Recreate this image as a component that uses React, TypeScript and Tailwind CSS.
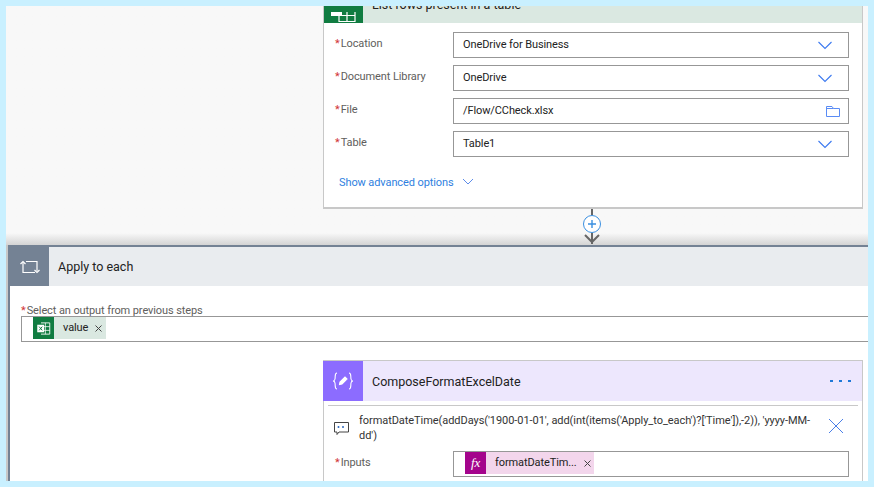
import React from 'react';

const Chevron = () => (
    <svg width="16" height="9" viewBox="0 0 16 9" fill="none" stroke="#3b79f0" strokeWidth="1.1" className="shrink-0">
        <path d="M1.5 1 L8 7.5 L14.5 1" />
    </svg>
);

const Folder = () => (
    <svg width="16" height="13" viewBox="0 0 16 13" fill="none" stroke="#5a8cf5" strokeWidth="1" className="shrink-0 -mr-[8px]">
        <path d="M1.5 11.5 V1.5 H7 L8.5 3.5 H14.5 V11.5 Z M1.5 3.5 H8.5" />
    </svg>
);

const ExcelIcon = ({ size }: { size: number }) => (
    <svg width={size} height={size} viewBox="0 0 24 24" fill="none" className="shrink-0">
        <path d="M8 3 H22 V21 H8" stroke="#ffffff" strokeWidth="1.4" />
        <path d="M8 9 H22 M8 15 H22 M15 3 V21" stroke="#ffffff" strokeWidth="1.2" />
        <rect x="2" y="6" width="11" height="12" fill="#ffffff" />
        <path d="M5 9 L10 15 M10 9 L5 15" stroke="#107c41" strokeWidth="1.5" />
    </svg>
);

const SmallX = () => (
    <svg width="7" height="7" viewBox="0 0 7 7" fill="none" stroke="#444444" strokeWidth="1" className="shrink-0">
        <path d="M0.5 0.5 L6.5 6.5 M6.5 0.5 L0.5 6.5" />
    </svg>
);

const Field = ({ label, value, icon }: { label: string; value: string; icon: React.ReactNode }) => (
    <div className="flex items-start h-[26px]">
        <div className="w-[129px] pl-[11px] mt-[2px] text-[#605e5c] leading-[20px]">
            <span className="text-[#d13438] mr-[1px]">*</span>{label}
        </div>
        <div className="w-[396px] h-[26px] border border-[#979797] flex items-center justify-between pl-[9px] pr-[15px] text-[#222222]">
            <span>{value}</span>
            {icon}
        </div>
    </div>
);

export default function App() {
    return (
        <div className="w-[874px] h-[487px] bg-[#c9f0ff] p-[6px] font-['Roboto',sans-serif] text-[11px] tracking-[-0.1px]">
            <div className="w-[862px] h-[475px] bg-[#f8f8f8] overflow-hidden flex flex-col">
                {/* top canvas with the table card */}
                <div className="h-[239px] shrink-0 bg-gradient-to-b from-[#f8f8f8] from-[95%] to-[#d4d4d4] pl-[317px]">
                    <div className="w-[540px] h-[203px] bg-white border-l border-r border-b-2 border-[#c8c8c8]">
                        <div className="h-[17px] bg-[#dae8e1] flex overflow-hidden">
                            <div className="w-[40px] h-[17px] bg-[#107c41] overflow-hidden flex justify-center items-end pb-[1px] -ml-[1px]">
                                <svg width="25" height="10" viewBox="0 0 25 10" fill="none" stroke="#ffffff" strokeWidth="1.2">
                                    <path d="M8 0 V9.5 H24 V0 M16 0 V9.5 M8 3.5 H24" />
                                    <rect x="0" y="0" width="11" height="4" fill="#ffffff" stroke="none" />
                                </svg>
                            </div>
                            <span className="ml-[9px] text-[12.5px] tracking-normal leading-[14px] text-[#222222] -mt-[8px]">List rows present in a table</span>
                        </div>
                        <div className="flex flex-col gap-[7px] pt-[9px]">
                            <Field label="Location" value="OneDrive for Business" icon={<Chevron />} />
                            <Field label="Document Library" value="OneDrive" icon={<Chevron />} />
                            <Field label="File" value="/Flow/CCheck.xlsx" icon={<Folder />} />
                            <Field label="Table" value="Table1" icon={<Chevron />} />
                        </div>
                        <div className="flex items-center gap-[8px] pl-[15px] pt-[17px] text-[#2f7fe0] leading-[18px]">
                            <span>Show advanced options</span>
                            <svg width="12" height="7" viewBox="0 0 12 7" fill="none" stroke="#4a7fe8" strokeWidth="0.9" className="-mt-[3px]">
                                <path d="M1 1 L6 6 L11 1" />
                            </svg>
                        </div>
                    </div>
                    {/* connector between the two steps */}
                    <svg width="22" height="36" viewBox="0 0 22 36" fill="none" className="ml-[258px]">
                        <path d="M11 0 V6" stroke="#666666" strokeWidth="2" />
                        <circle cx="11" cy="15" r="8.5" fill="#ffffff" stroke="#3a8fe0" />
                        <path d="M11 11 V19 M7 15 H15" stroke="#3a8fe0" strokeWidth="1.4" />
                        <path d="M11 24 V35" stroke="#666666" strokeWidth="2" />
                        <path d="M4 26 L11 33 L18 26" stroke="#666666" strokeWidth="2" />
                    </svg>
                </div>

                {/* apply to each */}
                <div className="flex-1 border-l-2 border-[#c8c8c8]">
                    <div className="h-full bg-white border-l-2 border-t-2 border-[#748294]">
                        <div className="h-[39px] bg-[#e9ecef] flex items-center">
                            <div className="w-[39px] h-[39px] bg-[#748294] flex items-center justify-center">
                                <svg width="20" height="16" viewBox="0 0 20 16" fill="none" stroke="#ffffff" strokeWidth="1.2">
                                    <path d="M3 3 V13.5 H15 M6 2.5 H17 V12" />
                                    <path d="M0.5 5 L3 2.5 L5.5 5 M14.5 11 L17 13.5 L19.5 11" />
                                </svg>
                            </div>
                            <span className="ml-[9px] mt-[1px] text-[12.5px] tracking-normal text-[#222222]">Apply to each</span>
                        </div>

                        <div className="pl-[11px] pt-[18px]">
                            <div className="text-[#605e5c] leading-[14px]">
                                <span className="text-[#d13438] mr-[1px]">*</span>Select an output from previous steps
                            </div>
                            <div className="h-[26px] -mt-[2px] border border-[#979797] border-r-0 pl-[11px]">
                                <div className="w-[73px] h-[22px] bg-[#dae8e1] flex items-center">
                                    <div className="w-[21px] h-[22px] bg-[#107c41] flex items-center justify-center shrink-0">
                                        <ExcelIcon size={15} />
                                    </div>
                                    <span className="ml-[9px] mt-[1px] text-[#222222]">value</span>
                                    <span className="ml-[7px] mt-[1px]"><SmallX /></span>
                                </div>
                            </div>
                        </div>

                        {/* nested compose card */}
                        <div className="ml-[313px] mt-[18px] w-[540px] h-[125px] border-t border-x border-[#c8c8c8] bg-white">
                            <div className="h-[40px] bg-[#ede7fd] flex items-center -ml-[1px]">
                                <div className="w-[40px] h-[40px] bg-[#8c6cff] flex items-center justify-center">
                                    <svg width="22" height="18" viewBox="0 0 22 18" fill="none" stroke="#ffffff" strokeWidth="1.1">
                                        <path d="M5 1 C2.5 1 3.5 4 3 7 C2.8 8.2 1.5 9 1 9 C1.5 9 2.8 9.8 3 11 C3.5 14 2.5 17 5 17" />
                                        <path d="M17 1 C19.5 1 18.5 4 19 7 C19.2 8.2 20.5 9 21 9 C20.5 9 19.2 9.8 19 11 C18.5 14 19.5 17 17 17" />
                                        <path d="M7.5 12.5 L8 10 L13 5 L15 7 L10 12 Z" fill="#ffffff" />
                                    </svg>
                                </div>
                                <span className="ml-[9px] mt-[3px] text-[12.5px] tracking-normal text-[#222222]">ComposeFormatExcelDate</span>
                                <div className="ml-auto mr-[11px] flex gap-[6px]">
                                    <div className="w-[3px] h-[2px] bg-[#1f78d8]" />
                                    <div className="w-[3px] h-[2px] bg-[#1f78d8]" />
                                    <div className="w-[3px] h-[2px] bg-[#1f78d8]" />
                                </div>
                            </div>
                            <div className="mx-[4px] mt-[4px] border-t border-[#c8c8c8] flex pt-[7px] pl-[6px]">
                                <svg width="15" height="14" viewBox="0 0 15 14" fill="none" stroke="#444444" strokeWidth="1" className="mt-[9px] shrink-0">
                                    <path d="M0.5 0.5 H14.5 V10 H5 L3 12.5 V10 H0.5 Z" />
                                    <path d="M4.5 4 V6 M9 4 V6" stroke="#3a70c0" strokeWidth="1.6" />
                                </svg>
                                <div className="ml-[10px] w-[461px] text-[#333333] leading-[15px] tracking-[-0.06px]">
                                    formatDateTime(addDays('1900-01-01', add(int(items('Apply_to_each')?['Time']),-2)), 'yyyy-MM-dd')
                                </div>
                                <svg width="16" height="16" viewBox="0 0 16 16" fill="none" stroke="#4a7fe8" strokeWidth="1" className="ml-[8px] mt-[5px] shrink-0">
                                    <path d="M1 1 L15 15 M15 1 L1 15" />
                                </svg>
                            </div>
                            <div className="flex items-start mt-[8px]">
                                <div className="w-[129px] pl-[11px] mt-[2px] text-[#605e5c] leading-[20px]">
                                    <span className="text-[#d13438] mr-[1px]">*</span>Inputs
                                </div>
                                <div className="w-[396px] h-[26px] border border-[#979797] pl-[11px]">
                                    <div className="w-[129px] h-[22px] bg-[#f3d6ec] flex items-center">
                                        <div className="w-[21px] h-[22px] bg-[#a4048c] text-white flex items-center justify-center font-['Liberation_Serif',serif] italic text-[13px] shrink-0">fx</div>
                                        <span className="ml-[9px] mt-[1px] text-[#222222]">formatDateTim...</span>
                                        <span className="ml-[7px] mt-[1px]"><SmallX /></span>
                                    </div>
                                </div>
                            </div>
                        </div>
                    </div>
                </div>
            </div>
        </div>
    );
}
